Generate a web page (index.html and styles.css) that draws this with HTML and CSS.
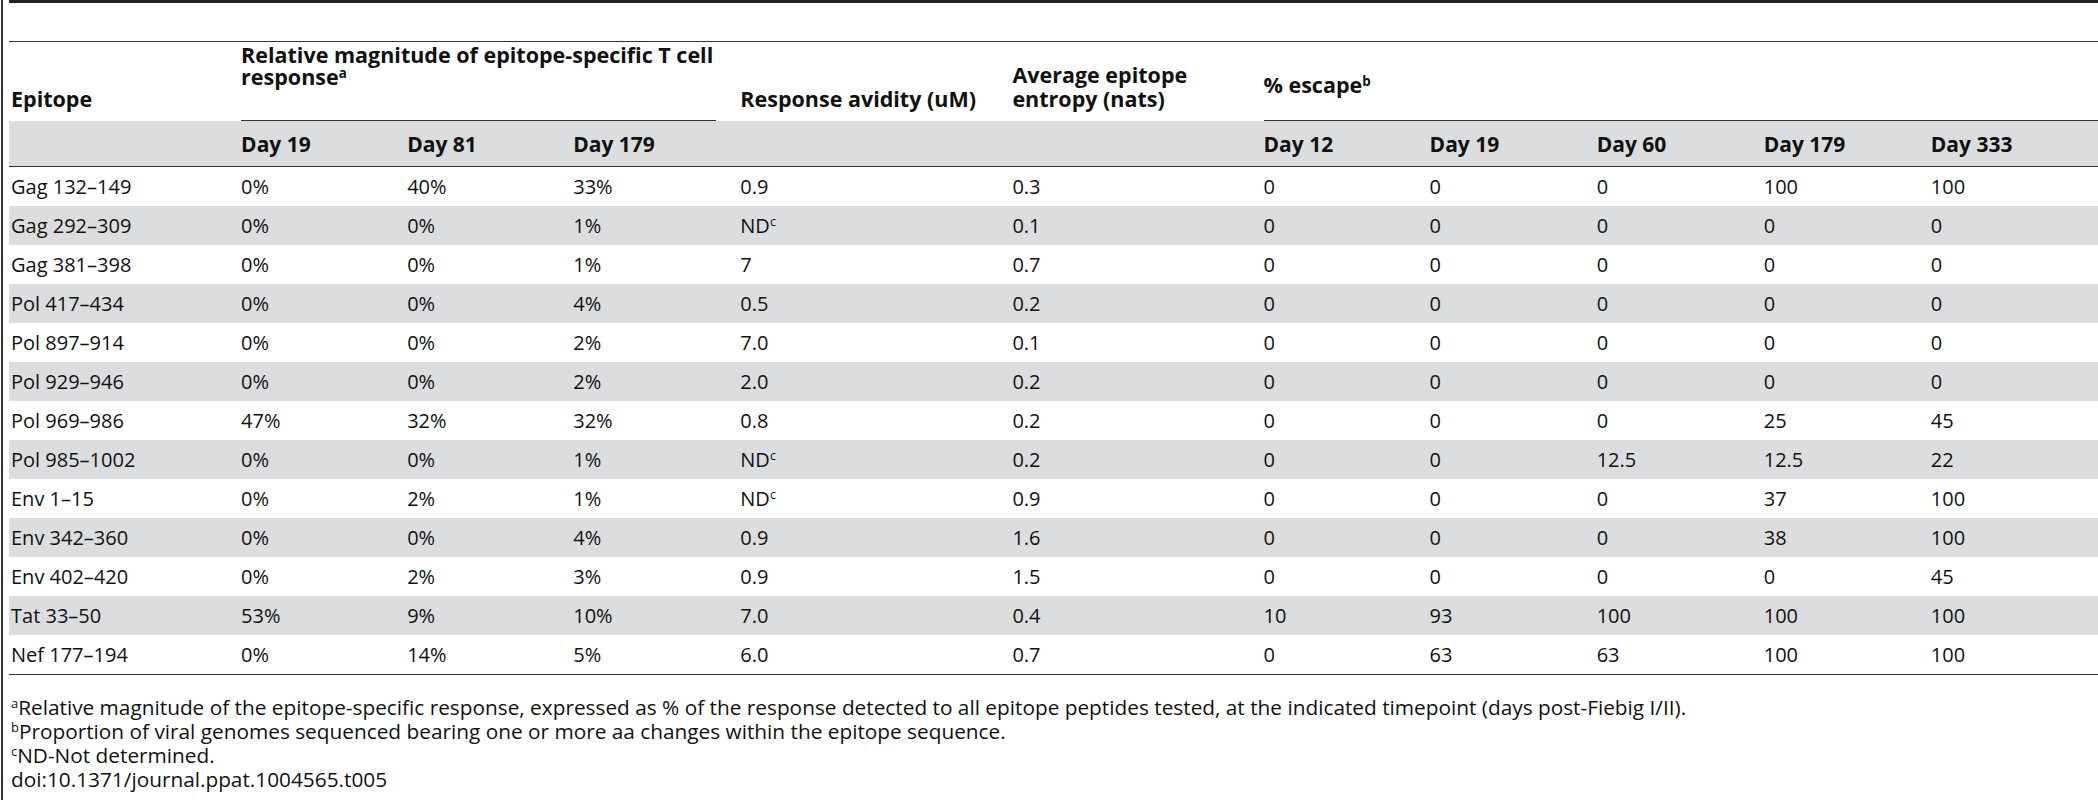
FILE: index.html
```html
<!DOCTYPE html>
<html lang="en">
<head>
    <meta charset="UTF-8">
    <title>Table 5. Epitope-specific T cell responses and escape</title>
    <link rel="stylesheet" href="styles.css">
</head>
<body>
    <div class="page">
        <div class="top-rule"></div>
        <table class="data">
            <colgroup>
                <col class="c-epitope">
                <col class="c-day">
                <col class="c-day">
                <col class="c-day-wide">
                <col class="c-avidity">
                <col class="c-entropy">
                <col class="c-day">
                <col class="c-day-wide">
                <col class="c-day-wide">
                <col class="c-day-wide">
                <col class="c-day-wide">
            </colgroup>
            <thead>
                <tr class="head-top">
                    <th class="first">Epitope</th>
                    <th colspan="3" class="group"><div class="group-label">Relative magnitude of epitope-specific T cell<br>response<sup>a</sup></div></th>
                    <th>Response avidity (uM)</th>
                    <th>Average epitope<br>entropy (nats)</th>
                    <th colspan="5" class="group group-end"><div class="group-label group-label-short">% escape<sup>b</sup></div></th>
                </tr>
                <tr class="head-sub">
                    <th class="first"></th>
                    <th>Day 19</th>
                    <th>Day 81</th>
                    <th>Day 179</th>
                    <th></th>
                    <th></th>
                    <th>Day 12</th>
                    <th>Day 19</th>
                    <th>Day 60</th>
                    <th>Day 179</th>
                    <th>Day 333</th>
                </tr>
            </thead>
            <tbody>
                <tr><td class="first">Gag 132–149</td><td>0%</td><td>40%</td><td>33%</td><td>0.9</td><td>0.3</td><td>0</td><td>0</td><td>0</td><td>100</td><td>100</td></tr>
                <tr><td class="first">Gag 292–309</td><td>0%</td><td>0%</td><td>1%</td><td>ND<sup>c</sup></td><td>0.1</td><td>0</td><td>0</td><td>0</td><td>0</td><td>0</td></tr>
                <tr><td class="first">Gag 381–398</td><td>0%</td><td>0%</td><td>1%</td><td>7</td><td>0.7</td><td>0</td><td>0</td><td>0</td><td>0</td><td>0</td></tr>
                <tr><td class="first">Pol 417–434</td><td>0%</td><td>0%</td><td>4%</td><td>0.5</td><td>0.2</td><td>0</td><td>0</td><td>0</td><td>0</td><td>0</td></tr>
                <tr><td class="first">Pol 897–914</td><td>0%</td><td>0%</td><td>2%</td><td>7.0</td><td>0.1</td><td>0</td><td>0</td><td>0</td><td>0</td><td>0</td></tr>
                <tr><td class="first">Pol 929–946</td><td>0%</td><td>0%</td><td>2%</td><td>2.0</td><td>0.2</td><td>0</td><td>0</td><td>0</td><td>0</td><td>0</td></tr>
                <tr><td class="first">Pol 969–986</td><td>47%</td><td>32%</td><td>32%</td><td>0.8</td><td>0.2</td><td>0</td><td>0</td><td>0</td><td>25</td><td>45</td></tr>
                <tr><td class="first">Pol 985–1002</td><td>0%</td><td>0%</td><td>1%</td><td>ND<sup>c</sup></td><td>0.2</td><td>0</td><td>0</td><td>12.5</td><td>12.5</td><td>22</td></tr>
                <tr><td class="first">Env 1–15</td><td>0%</td><td>2%</td><td>1%</td><td>ND<sup>c</sup></td><td>0.9</td><td>0</td><td>0</td><td>0</td><td>37</td><td>100</td></tr>
                <tr><td class="first">Env 342–360</td><td>0%</td><td>0%</td><td>4%</td><td>0.9</td><td>1.6</td><td>0</td><td>0</td><td>0</td><td>38</td><td>100</td></tr>
                <tr><td class="first">Env 402–420</td><td>0%</td><td>2%</td><td>3%</td><td>0.9</td><td>1.5</td><td>0</td><td>0</td><td>0</td><td>0</td><td>45</td></tr>
                <tr><td class="first">Tat 33–50</td><td>53%</td><td>9%</td><td>10%</td><td>7.0</td><td>0.4</td><td>10</td><td>93</td><td>100</td><td>100</td><td>100</td></tr>
                <tr><td class="first">Nef 177–194</td><td>0%</td><td>14%</td><td>5%</td><td>6.0</td><td>0.7</td><td>0</td><td>63</td><td>63</td><td>100</td><td>100</td></tr>
            </tbody>
        </table>
        <div class="notes">
            <p><sup>a</sup>Relative magnitude of the epitope-specific response, expressed as % of the response detected to all epitope peptides tested, at the indicated timepoint (days post-Fiebig I/II).</p>
            <p><sup>b</sup>Proportion of viral genomes sequenced bearing one or more aa changes within the epitope sequence.</p>
            <p><sup>c</sup>ND-Not determined.</p>
            <p>doi:10.1371/journal.ppat.1004565.t005</p>
        </div>
    </div>
</body>
</html>
```

FILE: styles.css
```css
body {
    margin: 0;
    background-color: #ffffff;
    color: #111111;
    font-family: "Open Sans", "Noto Sans", sans-serif;
    overflow: hidden;
}
.page {
    margin-left: 1px;
    border-left: 2px solid #333333;
    padding-left: 6px;
    min-height: 800px;
}
.top-rule {
    height: 3px;
    background-color: #222222;
}
.data {
    width: 2089px;
    table-layout: fixed;
    border-collapse: collapse;
    margin-top: 38px;
    font-size: 20px;
}
.c-epitope { width: 232px; }
.c-day { width: 166px; }
.c-day-wide { width: 167px; }
.c-avidity { width: 272px; }
.c-entropy { width: 251px; }

th, td {
    text-align: left;
    padding: 0 24px 0 0;
    white-space: nowrap;
}
.first {
    padding-left: 2px;
}
th {
    font-size: 21px;
    font-weight: 700;
}
.head-top th {
    border-top: 1px solid #333333;
    height: 69px;
    vertical-align: bottom;
    padding-bottom: 10px;
    line-height: 24px;
    font-size: 21.5px;
}
.head-top th.group {
    padding-bottom: 0;
}
.group-label {
    border-bottom: 1px solid #333333;
    padding-bottom: 32px;
    line-height: 22px;
}
.group-label-short {
    padding-bottom: 24px;
}
.group-end {
    padding-right: 0;
}
.head-sub th {
    background-color: #dcdddf;
    height: 45px;
    border-bottom: 1px solid #333333;
}
td {
    height: 39px;
    vertical-align: middle;
}
tbody tr:nth-child(even) td {
    background-color: #dcdddf;
}
tbody tr:last-child td {
    border-bottom: 1px solid #333333;
}
sup {
    font-size: 0.62em;
    line-height: 0;
    vertical-align: 0.55em;
}
.notes {
    margin-top: 20px;
    font-size: 20.8px;
    line-height: 24px;
}
.notes p {
    margin: 0;
    padding-left: 2px;
}
```
